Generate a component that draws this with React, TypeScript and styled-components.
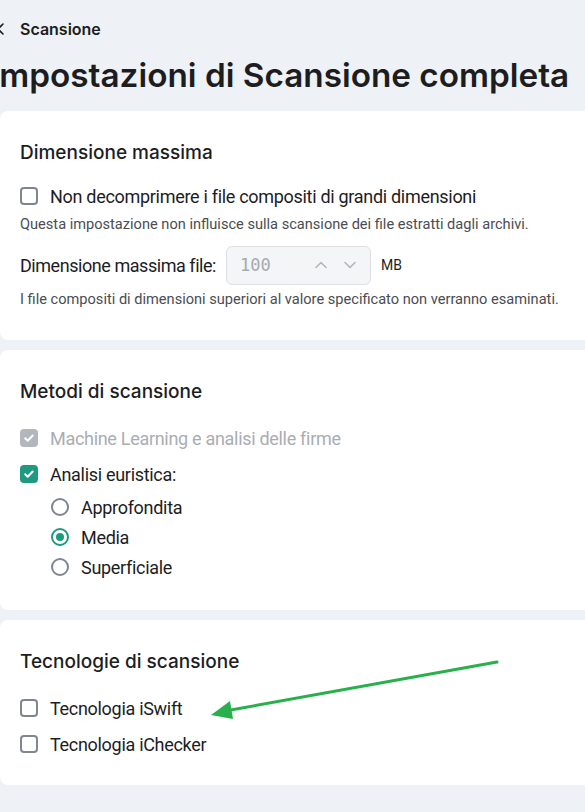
import styled, { createGlobalStyle } from 'styled-components';

const GlobalStyle = createGlobalStyle`
  html, body {
    margin: 0;
    padding: 0;
    background: #eef1f5;
  }
  body {
    font-family: Inter, "Noto Sans", sans-serif;
    color: #1d1d1f;
    overflow: hidden;
  }
`;

const Page = styled.div`
  position: relative;
  width: 585px;
  height: 812px;
  overflow: hidden;
  background: #eef1f5;
`;

const TopBar = styled.div`
  display: flex;
  align-items: center;
  gap: 15px;
  height: 28px;
  padding-top: 15px;
  margin-left: -5px;
  font-size: 16px;
  font-weight: 600;
`;

const Title = styled.h1`
  margin: 12px 0 0 -10px;
  font-size: 33.3px;
  font-weight: 600;
  white-space: nowrap;
  line-height: 40px;
  height: 56px;
`;

const Cards = styled.div`
  display: flex;
  flex-direction: column;
  gap: 10px;
`;

const Card = styled.section<{ $h: number }>`
  background: #fff;
  border-radius: 8px 0 0 8px;
  height: ${(p) => p.$h}px;
  box-sizing: border-box;
  padding: 30px 20px 0 20px;
`;

const CardTitle = styled.h2`
  margin: 0 0 16px;
  font-size: 19px;
  font-weight: 500;
  line-height: 24px;
`;

const Row = styled.label<{ $indent?: boolean; $disabled?: boolean; $h?: number }>`
  display: flex;
  align-items: center;
  gap: 12px;
  height: ${(p) => p.$h ?? 30}px;
  padding-left: ${(p) => (p.$indent ? 31 : 0)}px;
  font-family: Roboto, "Noto Sans", sans-serif;
  font-size: 18px;
  letter-spacing: -0.3px;
  color: ${(p) => (p.$disabled ? '#a9adb3' : '#1d1d1f')};
`;

const Box = styled.span<{ $state: 'off' | 'on' | 'disabled' }>`
  flex: none;
  width: 18px;
  height: 18px;
  box-sizing: border-box;
  border-radius: 4px;
  display: flex;
  align-items: center;
  justify-content: center;
  border: ${(p) => (p.$state === 'off' ? '2px solid #80868f' : 'none')};
  background: ${(p) =>
    p.$state === 'on' ? '#1e9a80' : p.$state === 'disabled' ? '#b3b7bd' : '#fff'};
`;

const Radio = styled.span<{ $on?: boolean }>`
  flex: none;
  width: 18px;
  height: 18px;
  box-sizing: border-box;
  border-radius: 50%;
  border: 2px solid ${(p) => (p.$on ? '#1e9a80' : '#80868f')};
  display: flex;
  align-items: center;
  justify-content: center;
  &::after {
    content: '';
    display: ${(p) => (p.$on ? 'block' : 'none')};
    width: 8px;
    height: 8px;
    border-radius: 50%;
    background: #1e9a80;
  }
`;

const Hint = styled.p<{ $gap?: number }>`
  margin: ${(p) => p.$gap ?? 0}px 0 0;
  font-family: Roboto, "Noto Sans", sans-serif;
  font-size: 14.6px;
  color: #4a4d52;
  line-height: 18px;
  white-space: nowrap;
`;

const SizeRow = styled.div`
  display: flex;
  align-items: center;
  height: 40px;
  margin: 12px 0 5px;
  font-family: Roboto, "Noto Sans", sans-serif;
  font-size: 18px;
  letter-spacing: -0.45px;
`;

const NumberBox = styled.div`
  display: flex;
  align-items: center;
  width: 145px;
  height: 39px;
  margin: 0 10px 0 10px;
  box-sizing: border-box;
  border: 1px solid #dcdfe3;
  border-radius: 6px;
  background: #f4f5f7;
  padding: 0 12px 0 13px;
  font-family: "DejaVu Sans Mono", "Liberation Mono", monospace;
  font-size: 17px;
  letter-spacing: 0;
  color: #a6aab0;
`;

const Value = styled.span`
  flex: 1;
`;

const Arrows = styled.span`
  display: flex;
  gap: 13px;
`;

const Unit = styled.span`
  font-size: 14px;
  letter-spacing: 0;
`;

const Check = () => (
  <svg width="12" height="12" viewBox="0 0 12 12" fill="none">
    <path d="M2.2 6.3l2.5 2.4 5-5.2" stroke="#fff" strokeWidth="2" strokeLinecap="round" strokeLinejoin="round" />
  </svg>
);

const Chevron = ({ up }: { up?: boolean }) => (
  <svg width="16" height="16" viewBox="0 0 16 16" fill="none">
    <path d={up ? 'M3 10.5l5-5 5 5' : 'M3 5.5l5 5 5-5'} stroke="#b2b6bc" strokeWidth="1.6" strokeLinecap="round" strokeLinejoin="round" />
  </svg>
);

const Annotation = styled.svg`
  position: absolute;
  left: 0;
  top: 0;
  pointer-events: none;
`;

export default function App() {
  return (
    <Page>
      <GlobalStyle />
      <TopBar>
        <svg width="10" height="12" viewBox="0 0 10 12" fill="none">
          <path d="M8 1L3 6l5 5" stroke="#1d1d1f" strokeWidth="1.6" strokeLinecap="round" strokeLinejoin="round" />
        </svg>
        Scansione
      </TopBar>
      <Title>Impostazioni di Scansione completa</Title>
      <Cards>
        <Card $h={229}>
          <CardTitle>Dimensione massima</CardTitle>
          <Row>
            <Box $state="off" />
            Non decomprimere i file compositi di grandi dimensioni
          </Row>
          <Hint $gap={4}>Questa impostazione non influisce sulla scansione dei file estratti dagli archivi.</Hint>
          <SizeRow>
            Dimensione massima file:
            <NumberBox>
              <Value>100</Value>
              <Arrows>
                <Chevron up />
                <Chevron />
              </Arrows>
            </NumberBox>
            <Unit>MB</Unit>
          </SizeRow>
          <Hint>I file compositi di dimensioni superiori al valore specificato non verranno esaminati.</Hint>
        </Card>
        <Card $h={260}>
          <CardTitle>Metodi di scansione</CardTitle>
          <Row $disabled $h={36}>
            <Box $state="disabled"><Check /></Box>
            Machine Learning e analisi delle firme
          </Row>
          <Row $h={36}>
            <Box $state="on"><Check /></Box>
            Analisi euristica:
          </Row>
          <Row $indent>
            <Radio />
            Approfondita
          </Row>
          <Row $indent>
            <Radio $on />
            Media
          </Row>
          <Row $indent>
            <Radio />
            Superficiale
          </Row>
        </Card>
        <Card $h={165}>
          <CardTitle>Tecnologie di scansione</CardTitle>
          <Row $h={36}>
            <Box $state="off" />
            Tecnologia iSwift
          </Row>
          <Row $h={36}>
            <Box $state="off" />
            Tecnologia iChecker
          </Row>
        </Card>
      </Cards>
      <Annotation width="585" height="812" viewBox="0 0 585 812">
        <line x1="497" y1="662" x2="225" y2="711" stroke="#27b04b" strokeWidth="3" strokeLinecap="round" />
        <polygon points="211,715 230,701 233,719" fill="#27b04b" />
      </Annotation>
    </Page>
  );
}
